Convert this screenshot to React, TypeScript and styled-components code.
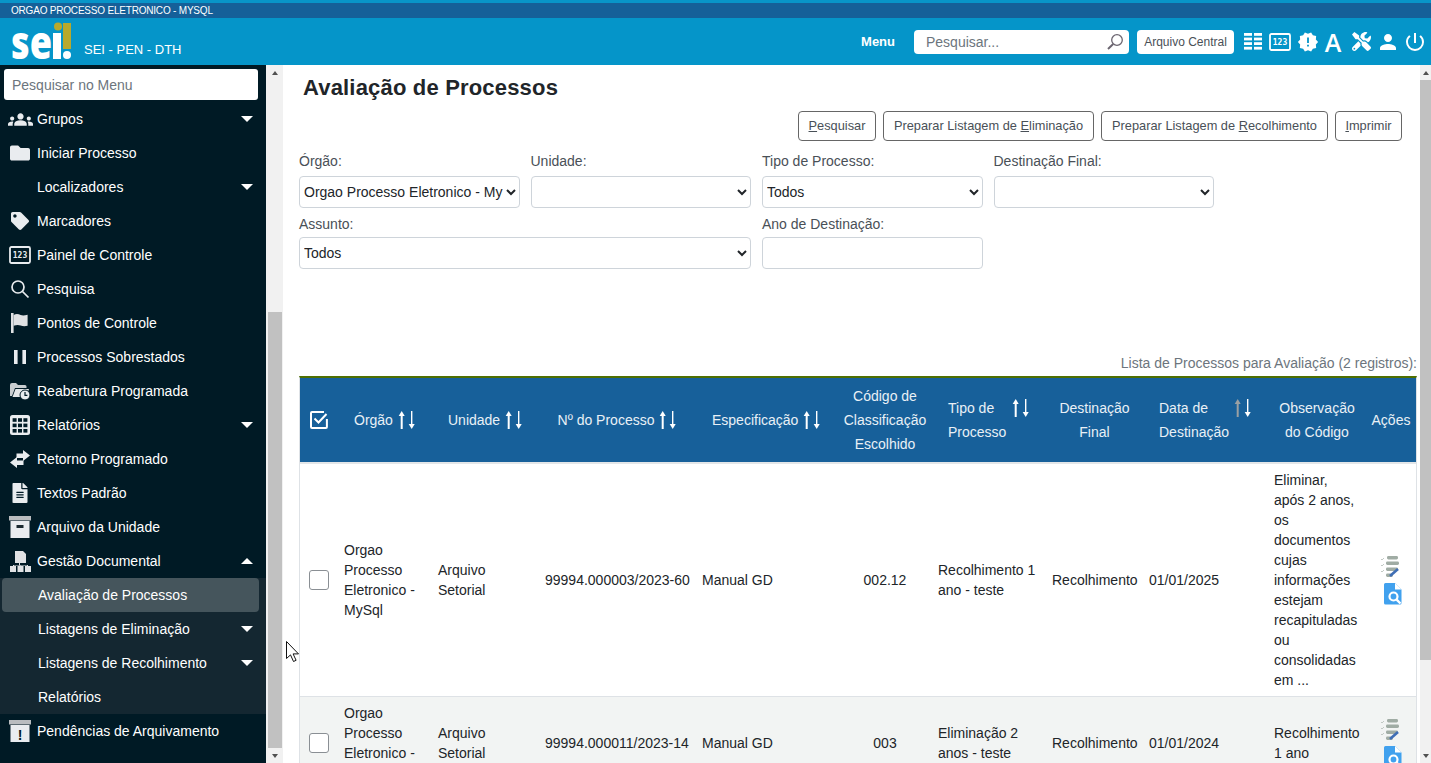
import React from 'react';
import styled, { createGlobalStyle } from 'styled-components';
import { FaFolder, FaTag, FaFileAlt, FaTools } from 'react-icons/fa';
import { MdGroups, MdNewReleases, MdPerson, MdPowerSettingsNew } from 'react-icons/md';

const GlobalStyle = createGlobalStyle`
  html, body { margin: 0; padding: 0; height: 100%; overflow: hidden; }
  body { font-family: 'Liberation Sans', Arial, sans-serif; font-size: 14px; color: #212529; background: #fff; }
  * { box-sizing: border-box; }
`;

const Page = styled.div`
  position: relative;
  height: 763px;
  display: flex;
  flex-direction: column;
  overflow: hidden;
`;

const TopBand = styled.div`
  height: 18px;
  background: #156099;
  border-top: 3px solid #0895c9;
  color: #fff;
  font-size: 10px;
  line-height: 15px;
  padding-left: 11px;
  letter-spacing: -0.2px;
`;

const Header = styled.header`
  height: 47px;
  background: #0595c9;
  display: flex;
  align-items: center;
  color: #fff;
  padding: 0 6px 0 11px;
`;

const Brand = styled.div`
  display: flex;
  align-items: flex-end;
  gap: 12px;
  flex: 1;
`;

const BrandName = styled.span`
  font-size: 13px;
  line-height: 16px;
  margin-bottom: 5px;
`;

const MenuLabel = styled.span`
  font-weight: bold;
  font-size: 13px;
  margin-right: 19px;
`;

const SearchBox = styled.div`
  width: 215px;
  height: 24px;
  background: #fff;
  border-radius: 4px;
  display: flex;
  align-items: center;
  justify-content: space-between;
  padding: 0 5px 0 12px;
  color: #6c757d;
  font-size: 14px;
  margin-right: 8px;
`;

const CentralButton = styled.div`
  width: 97px;
  height: 24px;
  background: #fff;
  border-radius: 4px;
  color: #495057;
  font-size: 12px;
  display: flex;
  align-items: center;
  justify-content: center;
  margin-right: 10px;
`;

const HeaderIcons = styled.div`
  display: flex;
  align-items: center;
  gap: 7px;
`;

const FontIcon = styled.span`
  width: 20px;
  margin: 0 2px 0 -2px;
  text-align: center;
  font-family: 'Open Sans', sans-serif;
  font-weight: 600;
  font-size: 25px;
  line-height: 24px;
`;

const Body = styled.div`
  flex: 1;
  min-height: 0;
  display: flex;
`;

const Sidebar = styled.aside`
  width: 266px;
  background: #001a25;
  color: #fff;
  flex-shrink: 0;
  overflow: hidden;
`;

const MenuSearch = styled.div`
  margin: 4px 8px 2px 4px;
  height: 31px;
  background: #fff;
  border-radius: 3px;
  color: #6c757d;
  padding: 0 8px;
  display: flex;
  align-items: center;
  font-size: 14px;
`;

const NavRow = styled.div<{ $sub?: boolean; $active?: boolean }>`
  height: 34px;
  display: flex;
  align-items: center;
  margin-right: ${p => (p.$active ? '7px' : '0')};
  margin-left: ${p => (p.$active ? '2px' : '0')};
  padding-left: ${p => (p.$active ? '36px' : p.$sub ? '38px' : '0')};
  padding-right: ${p => (p.$active ? '6px' : '13px')};
  background: ${p => (p.$active ? '#45555c' : 'transparent')};
  border-radius: ${p => (p.$active ? '4px' : '0')};
  font-size: 14px;
`;

const NavIcon = styled.span`
  width: 37px;
  flex-shrink: 0;
  display: flex;
  justify-content: center;
  padding-left: 3px;
  color: #e9ecef;
`;

const NavLabel = styled.span`
  flex: 1;
  white-space: nowrap;
`;

const SubMenu = styled.div`
  background: #142731;
`;

const Caret = styled.span<{ $up?: boolean }>`
  width: 0;
  height: 0;
  border-left: 6.5px solid transparent;
  border-right: 6.5px solid transparent;
  ${p => (p.$up ? 'border-bottom: 6.5px solid #fff;' : 'border-top: 6.5px solid #fff;')}
`;

const ScrollBar = styled.div<{ $width: number }>`
  width: ${p => p.$width}px;
  flex-shrink: 0;
  background: #f1f1f1;
  display: flex;
  flex-direction: column;
  align-items: center;
`;

const ScrollArrow = styled.div<{ $down?: boolean }>`
  height: 15px;
  flex-shrink: 0;
  width: 100%;
  display: flex;
  align-items: center;
  justify-content: center;
  &::after {
    content: '';
    border-left: 3.5px solid transparent;
    border-right: 3.5px solid transparent;
    ${p => (p.$down ? 'border-top: 4px solid #505050;' : 'border-bottom: 4px solid #505050;')}
  }
`;

const ScrollGap = styled.div<{ $size: number }>`
  flex: 0 0 ${p => p.$size}px;
`;

const ScrollThumb = styled.div<{ $size: number; $full?: boolean }>`
  flex: 0 0 ${p => p.$size}px;
  width: ${p => (p.$full ? '100%' : 'calc(100% - 3px)')};
  background: #c1c1c1;
`;

const Content = styled.main`
  flex: 1;
  min-width: 0;
  overflow: hidden;
  padding: 12px 3px 0 16px;
`;

const Title = styled.h1`
  margin: 0 0 12px 4px;
  font-size: 22px;
  line-height: 22px;
  font-weight: bold;
  letter-spacing: 0.18px;
  color: #212529;
`;

const ButtonRow = styled.div`
  display: flex;
  justify-content: flex-end;
  gap: 7px;
  padding-right: 15px;
  margin-bottom: 10px;
`;

const ActionButton = styled.button<{ $width: number }>`
  width: ${p => p.$width}px;
  height: 30px;
  background: #fff;
  border: 1px solid #666;
  border-radius: 4px;
  color: #495057;
  font: 12.8px 'Liberation Sans', Arial, sans-serif;
  padding: 0 0 1px;
  u { text-decoration: underline; }
`;

const FilterGrid = styled.div`
  width: 915px;
  display: grid;
  grid-template-columns: repeat(4, 220.5px);
  column-gap: 11px;
`;

const Field = styled.label<{ $span?: number; $tight?: boolean }>`
  display: flex;
  flex-direction: column;
  grid-column: span ${p => p.$span || 1};
  margin-top: ${p => (p.$tight ? '6px' : '0')};
`;

const FieldLabel = styled.span<{ $tight?: boolean }>`
  height: ${p => (p.$tight ? '23px' : '25px')};
  line-height: 20px;
  color: #495057;
`;

const Select = styled.select`
  height: 32px;
  width: 100%;
  border: 1px solid #ced4da;
  border-radius: 4px;
  background: #fff;
  color: #212529;
  font: 14px 'Liberation Sans', Arial, sans-serif;
  padding: 0;
`;

const TextInput = styled.input`
  height: 32px;
  width: 100%;
  border: 1px solid #ced4da;
  border-radius: 4px;
  background: #fff;
`;

const Caption = styled.div`
  margin-top: 84px;
  line-height: 20px;
  height: 23px;
  text-align: right;
  color: #6c757d;
`;

const Table = styled.table`
  width: 1118px;
  table-layout: fixed;
  border-collapse: separate;
  border-spacing: 0;
  border-top: 2px solid #4f6f00;
  border-left: 1px solid #dee2e6;
  border-right: 1px solid #dee2e6;
`;

const HeadRow = styled.tr`
  height: 86px;
  background: #17609a;
  color: #e9f0f6;
`;

const HeadCell = styled.th<{ $center?: boolean }>`
  font-weight: normal;
  line-height: 24px;
  padding: 0 ${p => (p.$center ? '0' : '16px')};
  text-align: ${p => (p.$center ? 'center' : 'left')};
  border-bottom: 2px solid #e3e6e8;
`;

const CheckHeadCell = styled(HeadCell)`
  padding: 0 0 0 10px;
`;

const SortLabel = styled.div<{ $spread?: boolean; $middle?: boolean }>`
  display: flex;
  align-items: ${p => (p.$spread ? 'flex-start' : 'center')};
  justify-content: ${p => (p.$spread ? 'space-between' : p.$middle ? 'center' : 'flex-start')};
  gap: 5px;
  white-space: nowrap;
  svg {
    flex-shrink: 0;
    margin-top: ${p => (p.$spread ? '3px' : '0')};
  }
`;

const DataRow = styled.tr<{ $striped?: boolean }>`
  background: ${p => (p.$striped ? '#f2f4f3' : '#fff')};
`;

const DataCell = styled.td<{ $center?: boolean; $nowrap?: boolean }>`
  padding: 6px;
  line-height: 20px;
  vertical-align: middle;
  text-align: ${p => (p.$center ? 'center' : 'left')};
  white-space: ${p => (p.$nowrap ? 'nowrap' : 'normal')};
  border-bottom: 1px solid #dee2e6;
`;

const RowCheck = styled.input.attrs({ type: 'checkbox' })`
  appearance: none;
  display: block;
  width: 20px;
  height: 20px;
  margin: 0 0 0 3px;
  background: #fff;
  border: 1px solid #8a8f94;
  border-radius: 3px;
`;

const ActionIcons = styled.div`
  display: flex;
  flex-direction: column;
  align-items: center;
  gap: 6px;
  svg:first-child { margin-right: 2px; }
  svg:last-child { margin-left: 4px; }
`;

const Pointer = styled.svg`
  position: absolute;
  left: 286px;
  top: 641px;
`;

const Logo = () => (
  <svg width="61" height="40" viewBox="0 0 61 40" style={{ display: 'block', marginTop: 2, overflow: 'visible' }}>
    <text x="0" y="36" fontFamily="'Open Sans', sans-serif" fontWeight="800" fontSize="46" textLength="41" lengthAdjust="spacingAndGlyphs" fill="#fff">se</text>
    <rect x="42" y="10" width="8" height="26" fill="#fff" />
    <circle cx="47" cy="3.5" r="4" fill="#b8a92c" />
    <rect x="52" y="0" width="8" height="26" fill="#b8a92c" />
    <circle cx="56" cy="32" r="4" fill="#fff" />
  </svg>
);

const Panel123 = ({ size = 22 }: { size?: number }) => (
  <svg width={size} height={(size * 18) / 22} viewBox="0 0 22 18">
    <rect x="1" y="1" width="20" height="16" rx="1.5" fill="none" stroke="currentColor" strokeWidth="1.8" />
    <text x="11" y="12.4" textAnchor="middle" fontFamily="'DejaVu Sans Mono', monospace" fontSize="8" fontWeight="bold" fill="currentColor">123</text>
  </svg>
);

const ListIcon = () => (
  <svg width="18" height="18" viewBox="0 0 18 18" fill="#fff">
    {[0, 4.6, 9.2, 13.8].map(y => (
      <g key={y}>
        <rect x="0" y={y} width="8" height="2.8" />
        <rect x="10" y={y} width="8" height="2.8" />
      </g>
    ))}
  </svg>
);

const SearchGlass = () => (
  <svg width="18" height="18" viewBox="0 0 18 18" fill="none" stroke="#6b6570">
    <circle cx="11" cy="7" r="5.3" strokeWidth="1.3" />
    <path d="M7.2 11 2 16" strokeWidth="2" />
  </svg>
);

const MenuGlass = () => (
  <svg width="20" height="20" viewBox="0 0 20 20" fill="none" stroke="#e9ecef" strokeWidth="1.7">
    <circle cx="8" cy="8" r="6" />
    <path d="M12.5 12.5 18.5 18.5" />
  </svg>
);

const FlagIcon = () => (
  <svg width="18" height="20" viewBox="0 0 18 20" fill="#dfe1e3">
    <rect x="0" y="0" width="2.6" height="20" />
    <path d="M2.6 2c3-1.6 5-.8 7 0s4 .5 7-.2v11c-3 .8-5 .4-7-.3s-4-.8-7 .3z" />
  </svg>
);

const PauseIcon = () => (
  <svg width="12" height="14" viewBox="0 0 12 14" fill="#e9ecef">
    <rect x="0" y="0" width="3.6" height="14" />
    <rect x="8.4" y="0" width="3.6" height="14" />
  </svg>
);

const TableIcon = () => (
  <svg width="20" height="20" viewBox="0 0 20 20">
    <rect x="0" y="0" width="20" height="20" rx="2.5" fill="#e9ecef" />
    <g fill="#001a25">
      {[3.2, 8.6, 14].map(y =>
        [2.6, 8, 13.4].map(x => <rect key={`${x}-${y}`} x={x} y={y} width="4" height="3.6" />)
      )}
    </g>
  </svg>
);

const SwapIcon = () => (
  <svg width="20" height="18" viewBox="0 0 20 18" fill="#e9ecef">
    <path d="M6.5 3.5H13V0l7 5.5-7 5.5V8H6.5z" />
    <path d="M13.5 10.5H7V7L0 12.5 7 18v-3h6.5z" />
  </svg>
);

const SitemapIcon = () => (
  <svg width="21" height="21" viewBox="0 0 21 21" fill="#e0e2e4">
    <path d="M5 0h8l3 3v9H5z" />
    <rect x="0" y="15" width="6" height="6" />
    <rect x="7.5" y="15" width="6" height="6" />
    <rect x="15" y="15" width="6" height="6" />
    <path d="M10 11v3h8v1h-1v-.5h-6.5V15h-1v-.5H4V15H3v-1h6v-3z" />
  </svg>
);

const ReopenIcon = () => (
  <svg width="20" height="18" viewBox="0 0 20 18">
    <path d="M0 3a2 2 0 0 1 2-2h4l2 2h7a1.5 1.5 0 0 1 1.5 1.5V6H5L2 14H0z" fill="#c9cdd0" />
    <path d="M5.5 7H19l-3 8H2.5z" fill="#e4e6e8" />
    <circle cx="15" cy="13" r="5" fill="#e9ecef" stroke="#001a25" />
    <path d="M15 10v3.3h2.4" fill="none" stroke="#001a25" strokeWidth="1.2" />
  </svg>
);

const ArchiveIcon = ({ alert }: { alert?: boolean }) => (
  <svg width="22" height="22" viewBox="0 0 22 22">
    <rect x="0" y="0" width="22" height="4.5" fill="#b9bcbf" />
    <rect x="1.5" y="5" width="19" height="17" fill="#e9ecef" />
    {alert ? (
      <text x="11" y="19.5" textAnchor="middle" fontFamily="'Liberation Sans', sans-serif" fontWeight="bold" fontSize="14" fill="#001a25">!</text>
    ) : (
      <rect x="7.5" y="9" width="7" height="3" fill="#1b2a31" />
    )}
  </svg>
);

const SortArrows = ({ dimUp }: { dimUp?: boolean }) => {
  const up = dimUp ? '#9aa0a3' : '#fff';
  return (
    <svg width="18" height="18" viewBox="0 0 18 18">
      <rect x="2.7" y="4" width="2" height="14" fill={up} />
      <path d="M.7 5 3.7 0l3 5z" fill={up} />
      <rect x="13" y="0" width="1.4" height="14" fill="#fff" />
      <path d="M10.7 13l3 5 3-5z" fill="#fff" />
    </svg>
  );
};

const CheckAll = () => (
  <svg width="18" height="18" viewBox="0 0 18 18" fill="none" stroke="#fff" style={{ display: 'block' }}>
    <path d="M16.9 8v8a1 1 0 0 1-1 1H2a1 1 0 0 1-1-1V2a1 1 0 0 1 1-1h12" strokeWidth="2" />
    <path d="M4.5 7.5 8.5 11.5 16.5 3" strokeWidth="2" />
  </svg>
);

const ChecklistIcon = () => (
  <svg width="18" height="22" viewBox="0 0 18 22" style={{ display: 'block' }}>
    <g fill="#a0aca4">
      <rect x="6" y="1" width="11" height="3.4" rx="1.4" />
      <rect x="5" y="6.5" width="13" height="3.4" rx="1.4" />
      <rect x="5" y="12.5" width="12" height="3.4" rx="1.4" />
      <rect x="5" y="18.5" width="7" height="3.4" rx="1.4" />
    </g>
    <path d="M0 4l1 1 2-2M0 10l1 1 2-2M0 16l1 1 2-2" stroke="#b4bdb7" strokeWidth=".8" fill="none" />
    <path d="M9 21l8-7" stroke="#3f6eb5" strokeWidth="2.6" />
  </svg>
);

const FileSearchIcon = () => (
  <svg width="18" height="22" viewBox="0 0 18 22" style={{ display: 'block' }}>
    <path d="M1.5 0H11l6.5 6.5V20a1.5 1.5 0 0 1-1.5 1.5H1.5A1.5 1.5 0 0 1 0 20V1.5A1.5 1.5 0 0 1 1.5 0z" fill="#41a1ee" />
    <path d="M11 0v6.5h6.5z" fill="#fff" />
    <circle cx="9.5" cy="13.5" r="4" fill="#41a1ee" stroke="#fff" strokeWidth="2.2" />
    <path d="M12.6 16.6 16.5 20.5" stroke="#fff" strokeWidth="2.4" />
  </svg>
);

type NavEntry = {
  label: string;
  icon?: React.ReactNode;
  caret?: 'up' | 'down';
  sub?: boolean;
  active?: boolean;
};

const navTop: NavEntry[] = [
  { label: 'Grupos', icon: <MdGroups size={25} />, caret: 'down' },
  { label: 'Iniciar Processo', icon: <FaFolder size={20} /> },
  { label: 'Localizadores', caret: 'down' },
  { label: 'Marcadores', icon: <FaTag size={18} /> },
  { label: 'Painel de Controle', icon: <Panel123 /> },
  { label: 'Pesquisa', icon: <MenuGlass /> },
  { label: 'Pontos de Controle', icon: <FlagIcon /> },
  { label: 'Processos Sobrestados', icon: <PauseIcon /> },
  { label: 'Reabertura Programada', icon: <ReopenIcon /> },
  { label: 'Relatórios', icon: <TableIcon />, caret: 'down' },
  { label: 'Retorno Programado', icon: <SwapIcon /> },
  { label: 'Textos Padrão', icon: <FaFileAlt size={20} /> },
  { label: 'Arquivo da Unidade', icon: <ArchiveIcon /> },
  { label: 'Gestão Documental', icon: <SitemapIcon />, caret: 'up' },
];

const navSub: NavEntry[] = [
  { label: 'Avaliação de Processos', active: true },
  { label: 'Listagens de Eliminação', caret: 'down' },
  { label: 'Listagens de Recolhimento', caret: 'down' },
  { label: 'Relatórios' },
];

const MenuRow = ({ entry }: { entry: NavEntry }) => (
  <NavRow $sub={entry.sub} $active={entry.active}>
    {!entry.sub && <NavIcon>{entry.icon}</NavIcon>}
    <NavLabel>{entry.label}</NavLabel>
    {entry.caret && <Caret $up={entry.caret === 'up'} />}
  </NavRow>
);

const columns = [38, 94, 107, 157, 142, 94, 114, 97, 125, 98, 50];

const rows = [
  {
    orgao: 'Orgao Processo Eletronico - MySql',
    numero: '99994.000003/2023-60',
    codigo: '002.12',
    tipo: 'Recolhimento 1 ano - teste',
    destinacao: 'Recolhimento',
    data: '01/01/2025',
    obs: 'Eliminar, após 2 anos, os documentos cujas informações estejam recapituladas ou consolidadas em ...',
  },
  {
    orgao: 'Orgao Processo Eletronico - MySql',
    numero: '99994.000011/2023-14',
    codigo: '003',
    tipo: 'Eliminação 2 anos - teste',
    destinacao: 'Recolhimento',
    data: '01/01/2024',
    obs: 'Recolhimento 1 ano',
  },
];

export default function App() {
  return (
    <Page>
      <GlobalStyle />
      <TopBand>ORGAO PROCESSO ELETRONICO - MYSQL</TopBand>
      <Header>
        <Brand>
          <Logo />
          <BrandName>SEI - PEN - DTH</BrandName>
        </Brand>
        <MenuLabel>Menu</MenuLabel>
        <SearchBox>
          Pesquisar...
          <SearchGlass />
        </SearchBox>
        <CentralButton>Arquivo Central</CentralButton>
        <HeaderIcons>
          <ListIcon />
          <Panel123 />
          <MdNewReleases size={22} style={{ margin: '0 -1px' }} />
          <FontIcon>A</FontIcon>
          <FaTools size={19} />
          <MdPerson size={24} style={{ margin: '0 -2px' }} />
          <MdPowerSettingsNew size={24} style={{ margin: '0 -2px' }} />
        </HeaderIcons>
      </Header>
      <Body>
        <Sidebar>
          <MenuSearch>Pesquisar no Menu</MenuSearch>
          {navTop.map(entry => (
            <MenuRow key={entry.label} entry={entry} />
          ))}
          <SubMenu>
            {navSub.map(entry => (
              <MenuRow key={entry.label} entry={{ ...entry, sub: true }} />
            ))}
          </SubMenu>
          <MenuRow entry={{ label: 'Pendências de Arquivamento', icon: <ArchiveIcon alert /> }} />
        </Sidebar>
        <ScrollBar $width={17}>
          <ScrollArrow />
          <ScrollGap $size={232} />
          <ScrollThumb $size={436} />
          <ScrollGap $size={0} />
          <ScrollArrow $down />
        </ScrollBar>
        <Content>
          <Title>Avaliação de Processos</Title>
          <ButtonRow>
            <ActionButton $width={78}><u>P</u>esquisar</ActionButton>
            <ActionButton $width={211}>Preparar Listagem de <u>E</u>liminação</ActionButton>
            <ActionButton $width={227}>Preparar Listagem de <u>R</u>ecolhimento</ActionButton>
            <ActionButton $width={67}><u>I</u>mprimir</ActionButton>
          </ButtonRow>
          <FilterGrid>
            <Field>
              <FieldLabel>Órgão:</FieldLabel>
              <Select defaultValue="o"><option value="o">Orgao Processo Eletronico - MySql</option></Select>
            </Field>
            <Field>
              <FieldLabel>Unidade:</FieldLabel>
              <Select><option></option></Select>
            </Field>
            <Field>
              <FieldLabel>Tipo de Processo:</FieldLabel>
              <Select><option>Todos</option></Select>
            </Field>
            <Field>
              <FieldLabel>Destinação Final:</FieldLabel>
              <Select><option></option></Select>
            </Field>
            <Field $span={2} $tight>
              <FieldLabel $tight>Assunto:</FieldLabel>
              <Select><option>Todos</option></Select>
            </Field>
            <Field $tight>
              <FieldLabel $tight>Ano de Destinação:</FieldLabel>
              <TextInput />
            </Field>
          </FilterGrid>
          <Caption>Lista de Processos para Avaliação (2 registros):</Caption>
          <Table>
            <colgroup>
              {columns.map((w, i) => (
                <col key={i} style={{ width: w }} />
              ))}
            </colgroup>
            <thead>
              <HeadRow>
                <CheckHeadCell><CheckAll /></CheckHeadCell>
                <HeadCell><SortLabel>Órgão <SortArrows /></SortLabel></HeadCell>
                <HeadCell><SortLabel>Unidade <SortArrows /></SortLabel></HeadCell>
                <HeadCell $center><SortLabel $middle>Nº do Processo <SortArrows /></SortLabel></HeadCell>
                <HeadCell><SortLabel>Especificação <SortArrows /></SortLabel></HeadCell>
                <HeadCell $center>Código de<br />Classificação<br />Escolhido</HeadCell>
                <HeadCell><SortLabel $spread><span>Tipo de<br />Processo</span><SortArrows /></SortLabel></HeadCell>
                <HeadCell $center>Destinação<br />Final</HeadCell>
                <HeadCell><SortLabel $spread><span>Data de<br />Destinação</span><SortArrows dimUp /></SortLabel></HeadCell>
                <HeadCell $center>Observação<br />do Código</HeadCell>
                <HeadCell $center>Ações</HeadCell>
              </HeadRow>
            </thead>
            <tbody>
              {rows.map((row, i) => (
                <DataRow key={row.numero} $striped={i === 1}>
                  <DataCell><RowCheck /></DataCell>
                  <DataCell>{row.orgao}</DataCell>
                  <DataCell>Arquivo Setorial</DataCell>
                  <DataCell $nowrap>{row.numero}</DataCell>
                  <DataCell>Manual GD</DataCell>
                  <DataCell $center>{row.codigo}</DataCell>
                  <DataCell>{row.tipo}</DataCell>
                  <DataCell $center>{row.destinacao}</DataCell>
                  <DataCell>{row.data}</DataCell>
                  <DataCell>{row.obs}</DataCell>
                  <DataCell>
                    <ActionIcons>
                      <ChecklistIcon />
                      <FileSearchIcon />
                    </ActionIcons>
                  </DataCell>
                </DataRow>
              ))}
            </tbody>
          </Table>
        </Content>
        <ScrollBar $width={11}>
          <ScrollArrow />
          <ScrollThumb $size={580} $full />
          <ScrollGap $size={88} />
          <ScrollArrow $down />
        </ScrollBar>
      </Body>
      <Pointer width="13" height="22" viewBox="0 0 13 22">
        <path d="M.5.5v17l4-3.6 3 6.6 2.6-1.2-3-6.4h5.4z" fill="#fff" stroke="#111" strokeWidth="1" />
      </Pointer>
    </Page>
  );
}
